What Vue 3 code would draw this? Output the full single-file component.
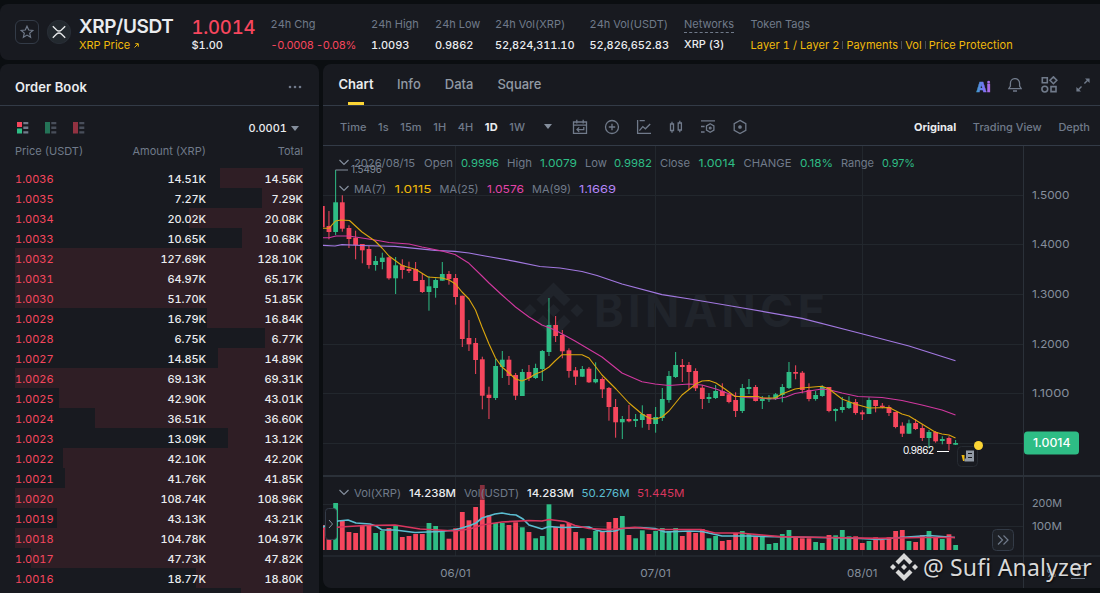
<script setup>
import { ref } from 'vue'

const stats = [
  { key: 'high', label: '24h High', value: '1.0093' },
  { key: 'low', label: '24h Low', value: '0.9862' },
  { key: 'base', label: '24h Vol(XRP)', value: '52,824,311.10' },
  { key: 'quote', label: '24h Vol(USDT)', value: '52,826,652.83' },
]

const tags = ['Layer 1 / Layer 2', 'Payments', 'Vol', 'Price Protection']

// depth is the width of the shaded bar in px
const asks = [
  { price: '1.0036', amount: '14.51K', total: '14.56K', depth: 83 },
  { price: '1.0035', amount: '7.27K', total: '7.29K', depth: 41 },
  { price: '1.0034', amount: '20.02K', total: '20.08K', depth: 114 },
  { price: '1.0033', amount: '10.65K', total: '10.68K', depth: 61 },
  { price: '1.0032', amount: '127.69K', total: '128.10K', depth: 288 },
  { price: '1.0031', amount: '64.97K', total: '65.17K', depth: 288 },
  { price: '1.0030', amount: '51.70K', total: '51.85K', depth: 288 },
  { price: '1.0029', amount: '16.79K', total: '16.84K', depth: 96 },
  { price: '1.0028', amount: '6.75K', total: '6.77K', depth: 38 },
  { price: '1.0027', amount: '14.85K', total: '14.89K', depth: 85 },
  { price: '1.0026', amount: '69.13K', total: '69.31K', depth: 288 },
  { price: '1.0025', amount: '42.90K', total: '43.01K', depth: 244 },
  { price: '1.0024', amount: '36.51K', total: '36.60K', depth: 208 },
  { price: '1.0023', amount: '13.09K', total: '13.12K', depth: 75 },
  { price: '1.0022', amount: '42.10K', total: '42.20K', depth: 240 },
  { price: '1.0021', amount: '41.76K', total: '41.85K', depth: 238 },
  { price: '1.0020', amount: '108.74K', total: '108.96K', depth: 288 },
  { price: '1.0019', amount: '43.13K', total: '43.21K', depth: 246 },
  { price: '1.0018', amount: '104.78K', total: '104.97K', depth: 288 },
  { price: '1.0017', amount: '47.73K', total: '47.82K', depth: 272 },
  { price: '1.0016', amount: '18.77K', total: '18.80K', depth: 107 },
  { price: '', amount: '', total: '', depth: 62 },
]

const tabs = ['Chart', 'Info', 'Data', 'Square']
const activeTab = ref('Chart')

const intervals = ['Time', '1s', '15m', '1H', '4H', '1D', '1W']
const activeInterval = ref('1D')

const views = ['Original', 'Trading View', 'Depth']
const activeView = ref('Original')

// high, body top, body bottom, low, volume top, rising
const series = [
  [206, 206, 227.3, 229, 525, 0],
  [211, 226, 232, 239.3, 539, 0],
  [170, 202.3, 232, 235, 503, 1],
  [195.3, 202.3, 228.7, 231.7, 521, 0],
  [225.3, 228, 239, 248, 532, 0],
  [230.7, 237.7, 245, 259.3, 533, 0],
  [244, 244, 250.3, 263.3, 526, 0],
  [246, 249, 265, 268.7, 526, 0],
  [256, 261, 265, 270.7, 533, 1],
  [252.7, 257.7, 262, 269.3, 531, 1],
  [256.7, 257.3, 278.3, 279.7, 528, 0],
  [257, 265.3, 278.3, 294, 526, 1],
  [259.3, 265.3, 270, 278.7, 537, 0],
  [261.7, 269, 271, 273, 536, 0],
  [262, 269, 281, 281, 534, 0],
  [273.3, 280, 292, 293, 534, 0],
  [276, 286.3, 292, 310.7, 523, 1],
  [278.3, 280, 288, 297.7, 526, 1],
  [262, 274, 280.7, 280.7, 531, 1],
  [271, 274, 279, 284.7, 538.7, 0],
  [274, 278, 297, 304.7, 528.3, 0],
  [295.7, 295.7, 339, 347, 512, 0],
  [320, 338, 344.3, 351, 520.3, 0],
  [338, 343, 360, 374, 507, 0],
  [356.7, 359.3, 395.7, 409.3, 485, 0],
  [386.7, 394.7, 398, 419, 515.3, 0],
  [359, 366, 398, 400, 523, 1],
  [351, 359.7, 367, 378, 523, 1],
  [356, 359.7, 376, 385, 525, 0],
  [373, 375, 395.7, 400, 522.3, 0],
  [369, 372, 396, 396, 527.3, 1],
  [365, 372, 378, 381, 532, 0],
  [363.7, 368, 378, 379, 538.3, 1],
  [350, 351, 369, 381, 536, 1],
  [298, 325, 352, 356, 504.3, 1],
  [316, 325, 336, 342, 527, 0],
  [330, 335, 351.3, 358.3, 524.3, 0],
  [348.3, 350.3, 371, 377.7, 523, 0],
  [367, 370.3, 376.7, 385, 532, 0],
  [366, 369, 376.7, 377, 538.3, 1],
  [367, 368.7, 382.3, 383, 538, 0],
  [362.3, 379, 382.3, 383.3, 531, 1],
  [377.3, 379, 389.3, 398, 531.3, 0],
  [387, 388, 407, 420.7, 522, 0],
  [399, 407, 422.3, 437.7, 518, 0],
  [416, 419, 422.3, 439, 516, 1],
  [405, 419, 421.3, 422.3, 535, 0],
  [414, 419, 421, 427, 538.3, 1],
  [405.3, 414, 420, 427.7, 530.3, 1],
  [414, 414, 424, 430, 534, 0],
  [407, 417, 424, 432.7, 531, 1],
  [388, 399, 418, 421, 528, 1],
  [371, 376, 400, 402.7, 531, 1],
  [352, 365, 377, 378, 528, 1],
  [359, 365, 367, 382, 536, 0],
  [362, 365, 372, 390, 531, 0],
  [368.3, 371, 388.3, 391, 533, 0],
  [385, 387.7, 399, 409, 529, 0],
  [393, 397, 399, 403, 538.3, 1],
  [385, 391, 398, 399, 536, 1],
  [383.3, 391, 396, 396, 541, 0],
  [393, 394.3, 402, 403.3, 540, 0],
  [392.3, 400, 411, 417, 533, 0],
  [384, 388, 411, 413, 531, 1],
  [379, 387, 389, 394, 534, 1],
  [385, 387, 401, 401.5, 536, 0],
  [396, 399, 401, 409, 536.3, 1],
  [395, 398, 399.5, 402, 544, 1],
  [393, 394.3, 399, 400, 543, 1],
  [384, 387, 395, 402.3, 534, 1],
  [362, 372, 388, 389, 530, 1],
  [365.3, 372, 373.7, 379.3, 536.3, 0],
  [371, 372.7, 390, 393.3, 538.3, 0],
  [383.3, 390, 399, 401.3, 538.3, 0],
  [391, 395, 399, 400.7, 542, 1],
  [385.3, 387, 396, 396.7, 543, 1],
  [387, 387, 411, 412.3, 535, 0],
  [408.3, 409, 411, 421.3, 535.3, 1],
  [397, 407, 410, 412.7, 530, 1],
  [396.3, 402, 408, 409, 536.3, 1],
  [399, 402, 413, 414.7, 536.3, 0],
  [410.3, 412.3, 414.3, 420, 543, 0],
  [397.3, 400, 414, 414, 541, 1],
  [400, 400, 406, 412.3, 537.3, 0],
  [403, 405.7, 407, 408.3, 540, 0],
  [405.3, 407, 413, 416, 537.3, 0],
  [412, 412, 427, 428.3, 531, 0],
  [422.3, 425.7, 433.7, 437, 530, 0],
  [419.7, 423.3, 433.7, 434, 541, 1],
  [419, 423, 429, 430, 542, 0],
  [424.3, 428, 438, 441, 535, 0],
  [430, 432, 438, 448, 531, 1],
  [431, 432, 441.3, 442.7, 537.3, 0],
  [436.3, 439, 441, 444.3, 539, 1],
  [436.3, 438, 444, 450.3, 534.3, 0],
  [440, 443, 444.7, 445, 545, 1],
]

const candles = series.map(([high, top, bottom, low, volume, up], i) => ({
  x: 322.3 + i * 6.6667,
  high,
  top,
  bottom,
  low,
  volume,
  color: up ? '#2ebd85' : '#f6465d',
}))

const ma7 =
  '323,228.3 328.8,228.3 335.5,221 341,220 349.5,220.5 362,232 375,241 382,248 389,256 402,265.5 416,269.5 428,277 442,278 449,280 455.5,284 462,292 469,299 475.5,310 482,327 489,344 495.5,358 502,367 509,373 515.5,379 522,381 529,378 535.5,374 542,371.5 549,367 555,361 562,354.7 582,354.7 589,358 602,375 616,389 629,403 642,414 650,418.5 656,419 662,417 669,411 682,395 696,384 702,381 709,380.5 716,383 725,389 735,396.5 758,396.5 762,398 775,398 782,394 795,389 802,388 822,386.3 829,389 842,399 855,404 869,408 889,407.5 902,414 909,416 922,424 935,432 942,434 949,435 955.5,438'
const ma25 =
  '323,237.7 329,237.7 336,236 349,236 362,238 375,240 389,242.5 409,244 422,247 442,251 455,254.5 469,263.3 482,276 489,283 502,295 515.5,307 529,317 542,325 555,330 575,341 602,357 622,373 642,381.7 655,384 669,385.5 689,384 702,385 716,389 735,396 745,397.5 758,398 775,399 786,397 795,393.5 809,391 822,389 829,389.7 842,393 858,396.5 882,397.5 902,400.5 922,405 942,410 955.5,415'
const ma99 =
  '323,245.3 335,246 342,244.7 362,245.5 395,246.3 415,248.3 435,250.3 455,251.3 469,253 485,256 515,261.3 540,266.5 560,268 582,271.5 597,275.5 622,284 662,294.7 690,299 740,307.5 802,318.3 855,332 909,346 955.5,360.7'
const volFast =
  '323,527 338,521 348,520 356,523 370,524 376,526 382,530 395,530 415,532.5 440,531.5 455,530 470,525.5 476,523 482,518 495,514 502,513 510,514.5 516,515 523,519 529,525 542,529 549,526.5 562,527.5 589,527 596,530 602,531.5 615,531 622,528.5 640,527.5 655,528.5 665,532 689,531 702,531.5 722,536 749,536 790,537 850,538 880,539.5 900,537.5 929,535.5 942,536.5 955,537.5'
const volSlow =
  '323,529 340,527 365,525.5 395,525 420,529 455,531 470,529 482,525 502,522 529,520.5 542,521 549,519.5 565,521.5 575,525.5 589,528.5 609,529.5 635,527.3 655,529.5 680,529.5 701,529.5 715,533 740,533 762,535 780,536.7 830,537.5 880,538.3 920,537.5 955,537.5'

const priceTicks = [
  { y: 195.3, label: '1.5000' },
  { y: 244.9, label: '1.4000' },
  { y: 294.5, label: '1.3000' },
  { y: 344.1, label: '1.2000' },
  { y: 393.7, label: '1.1000' },
  { y: 443.3, label: '' },
]
const volumeTicks = [
  { y: 504, label: '200M' },
  { y: 526.5, label: '100M' },
]
const months = [
  { x: 455.5, label: '06/01' },
  { x: 655.5, label: '07/01' },
  { x: 862.3, label: '08/01' },
]

const legend = [
  // date and prices
  { x: 354, y: 167, w: 61, text: '2026/08/15', tone: 'muted' },
  { x: 424, y: 167, w: 29, text: 'Open', tone: 'muted' },
  { x: 461, y: 167, w: 38, text: '0.9996', tone: 'up' },
  { x: 507, y: 167, w: 25, text: 'High', tone: 'muted' },
  { x: 540, y: 167, w: 37, text: '1.0079', tone: 'up' },
  { x: 585, y: 167, w: 22, text: 'Low', tone: 'muted' },
  { x: 614, y: 167, w: 38, text: '0.9982', tone: 'up' },
  { x: 660, y: 167, w: 30, text: 'Close', tone: 'muted' },
  { x: 698.5, y: 167, w: 37, text: '1.0014', tone: 'up' },
  { x: 743.5, y: 167, w: 48, text: 'CHANGE', tone: 'muted' },
  { x: 800, y: 167, w: 33, text: '0.18%', tone: 'up' },
  { x: 841, y: 167, w: 33, text: 'Range', tone: 'muted' },
  { x: 882, y: 167, w: 33, text: '0.97%', tone: 'up' },
  // moving averages
  { x: 354, y: 193, w: 32, text: 'MA(7)', tone: 'muted' },
  { x: 394.5, y: 193, w: 37, text: '1.0115', tone: 'gold' },
  { x: 439.5, y: 193, w: 39, text: 'MA(25)', tone: 'muted' },
  { x: 487, y: 193, w: 37, text: '1.0576', tone: 'pink' },
  { x: 532, y: 193, w: 39, text: 'MA(99)', tone: 'muted' },
  { x: 579, y: 193, w: 37, text: '1.1669', tone: 'violet' },
  // volume
  { x: 354, y: 497, w: 47, text: 'Vol(XRP)', tone: 'muted' },
  { x: 409, y: 497, w: 47, text: '14.238M', tone: 'strong' },
  { x: 464, y: 497, w: 55, text: 'Vol(USDT)', tone: 'muted' },
  { x: 527, y: 497, w: 47, text: '14.283M', tone: 'strong' },
  { x: 581.5, y: 497, w: 48, text: '50.276M', tone: 'cyan' },
  { x: 637, y: 497, w: 47.5, text: '51.445M', tone: 'red' },
]
</script>

<template>
  <div class="app">
    <header class="ticker">
      <button type="button" class="favorite" aria-label="Add to favorites">
        <svg width="14" height="14" viewBox="0 0 14 14">
          <path d="M7 1.2 8.7 5l4.1.4-3.1 2.7.9 4.1L7 10.1l-3.6 2.1.9-4.1L1.2 5.4 5.3 5Z" fill="none" stroke="#707a8a" stroke-width="1.2" />
        </svg>
      </button>
      <svg class="coin" width="24" height="24" viewBox="0 0 24 24">
        <circle cx="12" cy="12" r="11.7" fill="#23292f" stroke="#2f363f" stroke-width=".6" />
        <path d="M5.8 6.3 9.6 10q2.4 2.1 4.8 0l3.8-3.7M5.8 17.7 9.6 14q2.4-2.1 4.8 0l3.8 3.7" fill="none" stroke="#e6e8ea" stroke-width="1.4" />
      </svg>
      <div class="pair">
        <h1>XRP/USDT</h1>
        <a class="price-link">
          XRP Price
          <svg width="5" height="5" viewBox="0 0 5 5"><path d="M.5 4.5 4 1M1.3.7h3v3" fill="none" stroke="#f0b90b" /></svg>
        </a>
      </div>
      <div class="last">
        <strong>1.0014</strong>
        <span>$1.00</span>
      </div>
      <div class="stat change">
        <span class="label">24h Chg</span>
        <span class="value">-0.0008 -0.08%</span>
      </div>
      <div v-for="stat in stats" :key="stat.key" class="stat" :class="stat.key">
        <span class="label">{{ stat.label }}</span>
        <span class="value">{{ stat.value }}</span>
      </div>
      <div class="stat networks">
        <span class="label">Networks</span>
        <span class="value">XRP (3)</span>
      </div>
      <div class="stat tags">
        <span class="label">Token Tags</span>
        <span class="tag-list"><a v-for="tag in tags" :key="tag">{{ tag }}</a></span>
      </div>
    </header>

    <main class="panels">
      <section class="order-book">
        <div class="panel-head">
          <h2>Order Book</h2>
          <svg width="14" height="4" viewBox="0 0 14 4" fill="#707a8a"><circle cx="2" cy="2" r="1.3" /><circle cx="7" cy="2" r="1.3" /><circle cx="12" cy="2" r="1.3" /></svg>
        </div>
        <div class="book-tools">
          <svg width="12" height="12" viewBox="0 0 12 12">
            <path d="M0 0h5v5H0z" fill="#f6465d" /><path d="M0 6.5h5v5H0z" fill="#2ebd85" />
            <path d="M6.3 0h5v2.3h-5zM6.3 4.6h5v2.3h-5zM6.3 9.2h5v2.3h-5z" fill="#707a8a" />
          </svg>
          <svg class="dim" width="12" height="12" viewBox="0 0 12 12">
            <path d="M0 0h5v11.5H0z" fill="#2ebd85" />
            <path d="M6.3 0h5v2.3h-5zM6.3 4.6h5v2.3h-5zM6.3 9.2h5v2.3h-5z" fill="#707a8a" />
          </svg>
          <svg class="dim" width="12" height="12" viewBox="0 0 12 12">
            <path d="M0 0h5v11.5H0z" fill="#f6465d" />
            <path d="M6.3 0h5v2.3h-5zM6.3 4.6h5v2.3h-5zM6.3 9.2h5v2.3h-5z" fill="#707a8a" />
          </svg>
          <span class="tick-size">0.0001</span>
          <span class="caret"></span>
        </div>
        <div class="book-row book-labels">
          <span>Price (USDT)</span>
          <span>Amount (XRP)</span>
          <span>Total</span>
        </div>
        <div class="asks">
          <div v-for="ask in asks" :key="ask.price" class="book-row ask">
            <div class="depth" :style="{ width: ask.depth + 'px' }"></div>
            <span class="ask-price">{{ ask.price }}</span>
            <span>{{ ask.amount }}</span>
            <span>{{ ask.total }}</span>
          </div>
        </div>
      </section>

      <section class="chart-panel">
        <nav class="tabs">
          <button
            v-for="tab in tabs"
            :key="tab"
            type="button"
            :class="{ 'is-active': tab === activeTab }"
            @click="activeTab = tab"
          >
            {{ tab }}
          </button>
          <div class="tab-icons">
            <span class="ai">Ai</span>
            <svg width="14" height="14" viewBox="0 0 14 14" fill="none" stroke="#707a8a" stroke-width="1.3">
              <path d="M.8 10.6h12.4L11.6 8V5.2a4.6 4.6 0 0 0-9.2 0V8ZM5 13h4" />
            </svg>
            <svg width="17" height="17" viewBox="0 0 17 17" fill="none" stroke="#707a8a" stroke-width="1.6">
              <path d="M1.3 1.8h5v5h-5zM12.4.9l3.4 3.4-3.4 3.4L9 4.3ZM10 10.6h5v5h-5z" /><circle cx="3.8" cy="13.1" r="2.9" />
            </svg>
            <svg width="14" height="14" viewBox="0 0 14 14">
              <path d="m1.8 12.2 3.7-3.7m2.9-2.9 3.8-3.8" fill="none" stroke="#707a8a" stroke-width="1.4" />
              <path d="M9 .4h4.6V5zM.4 9v4.6H5z" fill="#707a8a" />
            </svg>
          </div>
        </nav>

        <div class="toolbar">
          <button
            v-for="interval in intervals"
            :key="interval"
            type="button"
            class="interval"
            :class="{ 'is-active': interval === activeInterval }"
            @click="activeInterval = interval"
          >
            {{ interval }}
          </button>
          <span class="caret"></span>
          <div class="tools">
            <svg viewBox="0 0 16 16"><path d="M1.5 3h13v11.3h-13zM1.5 6.2h13M4.8.8v3.6M11.2.8v3.6M11.8 8v2.6H5M7.2 8.4 5 10.6l2.2 2.2" /></svg>
            <svg viewBox="0 0 16 16"><circle cx="8" cy="8" r="6.5" /><path d="M8 4.8v6.4M4.8 8h6.4" /></svg>
            <svg viewBox="0 0 16 16"><path d="M1.6 1v13.4H15M3.6 1.7h5.2M3.4 11.6 6.8 7.6l2.6 2.2L14.2 5" /></svg>
            <svg viewBox="0 0 16 16"><path d="M2.5 5h3v6.5h-3zM4 2.8V5M4 11.5v2.2M10.2 4h3.2v7h-3.2zM11.8 1.8V4M11.8 11v2.2" /></svg>
            <svg viewBox="0 0 16 16"><path d="M1 1.8h14M1 7.5h3.6M1 13h3.6M10.2 4.8l3.7 2.1v4.2l-3.7 2.1-3.7-2.1V6.9Z" /><circle cx="10.2" cy="9" r=".9" /></svg>
            <svg viewBox="0 0 16 16"><path d="m8 1.4 5.8 3.3v6.6L8 14.6l-5.8-3.3V4.7Z" /><circle cx="8" cy="8" r="1.2" fill="#707a8a" /></svg>
          </div>
          <div class="views">
            <button
              v-for="view in views"
              :key="view"
              type="button"
              :class="{ 'is-active': view === activeView }"
              @click="activeView = view"
            >
              {{ view }}
            </button>
          </div>
        </div>

        <svg class="chart" width="777" height="442" viewBox="323 146 777 442">
          <!-- grid -->
          <g stroke="#22272d">
            <path v-for="tick in [...priceTicks, ...volumeTicks]" :key="tick.y" :d="`M323 ${Math.floor(tick.y) + 0.5}H1023`" />
            <path v-for="month in months" :key="month.x" :d="`M${Math.floor(month.x) + 0.5} 146V556`" />
          </g>

          <!-- watermark -->
          <g fill="#20242b">
            <g transform="translate(553.5 310.5)">
              <path d="m0-28 17 17-6.5 6.5L0-15l-10.5 10.5L-17-11ZM0 28 17 11l-6.5-6.5L0 15-10.5 4.5-17 11ZM0-6.5 6.5 0 0 6.5-6.5 0ZM-23.5-6.5-17 0l-6.5 6.5L-30 0ZM23.5-6.5 30 0l-6.5 6.5L17 0Z" />
            </g>
            <text x="594" y="327" font-size="45" font-weight="700" textLength="231">BINANCE</text>
          </g>

          <path d="M323 476H1100" stroke="#2b3139" stroke-width="2" />
          <path d="M323 556H1100M1023.5 146V588" stroke="#2b3139" />

          <g>
            <template v-for="candle in candles" :key="candle.x">
              <path :d="`M${candle.x} ${candle.high}V${candle.low}`" :stroke="candle.color" />
              <rect :x="candle.x - 2.4" :y="candle.top" width="4.8" :height="candle.bottom - candle.top" :fill="candle.color" />
              <rect :x="candle.x - 2.4" :y="candle.volume" width="4.8" :height="550 - candle.volume" :fill="candle.color" />
            </template>
          </g>
          <!-- the tallest bar fades behind the volume legend -->
          <rect x="479" y="484" width="7" height="16" fill="#181a20" opacity="0.5" />

          <g fill="none" stroke-linejoin="round">
            <polyline :points="ma99" stroke="#a278e0" stroke-width="1.2" />
            <polyline :points="ma25" stroke="#d1389f" stroke-width="1.1" />
            <polyline :points="ma7" stroke="#dba60e" stroke-width="1.1" />
            <polyline :points="volFast" stroke="#5bbdd0" stroke-width="1.7" />
            <polyline :points="volSlow" stroke="#d9365e" stroke-width="1.7" />
          </g>

          <!-- high and low marks -->
          <path d="M335.5 170H348" stroke="#848e9c" />
          <text x="351" y="173" font-size="10" fill="#848e9c" textLength="31">1.5496</text>
          <path d="M937 451.5H949" stroke="#fff" />
          <text x="903" y="454.3" font-size="10" fill="#fff" textLength="31">0.9862</text>

          <!-- legend -->
          <g fill="none" stroke="#848e9c" stroke-width="1.2">
            <path d="m339.5 160 4.5 4.5 4.5-4.5M339.5 186l4.5 4.5 4.5-4.5M339.5 490l4.5 4.5 4.5-4.5" />
          </g>
          <text
            v-for="item in legend"
            :key="`${item.x}-${item.y}`"
            :x="item.x"
            :y="item.y"
            :textLength="item.w"
            :class="item.tone"
            lengthAdjust="spacingAndGlyphs"
            font-size="11"
          >{{ item.text }}</text>

          <!-- axes -->
          <g class="axis">
            <text v-for="tick in priceTicks" :key="tick.y" x="1032" :y="tick.y + 3.4" textLength="37.5" lengthAdjust="spacingAndGlyphs">{{ tick.label }}</text>
            <text v-for="tick in volumeTicks" :key="tick.y" x="1032" :y="tick.y + 3.2" textLength="30" lengthAdjust="spacingAndGlyphs">{{ tick.label }}</text>
            <text v-for="month in months" :key="month.x" :x="month.x" y="577" text-anchor="middle" textLength="30.5" lengthAdjust="spacingAndGlyphs">{{ month.label }}</text>
            <text x="1046" y="577">%</text>
          </g>
          <path d="M1071 565.5H1085M1071 578.5H1085M1078 567V575" stroke="#707a8a" />
          <rect x="1024" y="431.500" width="55" height="23" rx="3.5" fill="#2ebd85" />
          <text x="1033" y="447" font-size="11.5" font-weight="500" fill="#fff" textLength="37.5" lengthAdjust="spacingAndGlyphs">1.0014</text>

          <!-- news marker -->
          <rect x="957.5" y="446.5" width="20" height="20" rx="4" fill="#181a20" stroke="#262b32" />
          <path d="M961.5 455h3v6h-1.5z" fill="#f0b90b" />
          <path d="M966 450.5h8v11h-9.5v-3h1.5z" fill="#929aa5" />
          <path d="M968 453.5h4M968 457.5h4" stroke="#181a20" />
          <circle cx="978.5" cy="445.5" r="4.5" fill="#fcd535" />

          <!-- scroll buttons -->
          <rect x="325.5" y="508.5" width="11" height="31" rx="3" fill="#181a20" stroke="#333b47" />
          <path d="m329 520 3.5 4-3.5 4" fill="none" stroke="#848e9c" />
          <rect x="992.5" y="529.5" width="21" height="21" rx="4" fill="#1e2127" stroke="#333b47" />
          <path d="m998 535.5 4.5 4.5-4.5 4.5M1003.5 535.5l4.5 4.5-4.5 4.5" fill="none" stroke="#707a8a" stroke-width="1.2" />
        </svg>
      </section>
    </main>

    <div class="signature">
      <svg width="28" height="28" viewBox="-14 -14 28 28" fill="#d9d9d9">
        <path d="m0-14 8.5 8.5-3 3L0-8l-5.5 5.5-3-3ZM0 14l8.500-8.500-3-3L0 8l-5.500-5.500-3 3ZM0-3 3 0 0 3-3 0ZM-11-3-8 0l-3 3-3-3ZM11-3l3 3-3 3-3-3Z" />
      </svg>
      <span>@ Sufi Analyzer</span>
    </div>
  </div>
</template>

<style>
body {
  background: #0b0e11;
  overflow: hidden;
}
</style>

<style scoped>
.app {
  position: relative;
  box-sizing: border-box;
  width: 1100px;
  height: 593px;
  padding-top: 4px;
  overflow: hidden;
  color: #eaecef;
  font-family: Inter, sans-serif;
  font-size: 12px;
  background: #0b0e11;
}

svg {
  display: block;
  flex: none;
}

button {
  padding: 0;
  border: 0;
  color: inherit;
  font: inherit;
  letter-spacing: inherit;
  white-space: nowrap;
  background: none;
  cursor: pointer;
}

.ticker {
  display: flex;
  box-sizing: border-box;
  height: 56px;
  padding: 0 15px;
  border-radius: 8px 0 0 8px;
  background: #181a20;
  font-variant-numeric: tabular-nums;
}

.favorite {
  display: grid;
  box-sizing: border-box;
  width: 24px;
  height: 24px;
  margin-top: 16px;
  place-items: center;
  border: 1px solid #333b47;
  border-radius: 6px;
}

.coin {
  margin: 16px 8px 0;
}

.pair {
  width: 112.5px;
}

h1 {
  margin: 12px 0 0;
  font-size: 19px;
  font-weight: 600;
  line-height: 22px;
  letter-spacing: -0.4px;
}

.price-link {
  display: flex;
  gap: 4px;
  align-items: center;
  color: #f0b90b;
  font-size: 11px;
  line-height: 15px;
}

.last {
  display: flex;
  flex-direction: column;
  width: 79px;
}

.last strong {
  margin-top: 12px;
  color: #f6465d;
  font-size: 18.5px;
  font-weight: 500;
  line-height: 22px;
  letter-spacing: -0.2px;
}

.last span {
  font-size: 11px;
  font-weight: 500;
  line-height: 15px;
}

.stat {
  display: flex;
  flex: none;
  flex-direction: column;
  font-size: 11px;
  line-height: 14px;
  white-space: nowrap;
}

.label {
  margin-top: 13px;
  color: #707a8a;
}

.value {
  margin-top: 7px;
  font-weight: 550;
  letter-spacing: -0.05px;
}

.change {
  width: 100.5px;
}

.change .value {
  color: #f6465d;
  font-weight: 400;
  letter-spacing: -0.4px;
}

.high {
  width: 64px;
}

.low {
  width: 60px;
}

.base {
  width: 94.5px;
}

.quote {
  width: 94.5px;
}

.networks {
  width: 66.5px;
  align-items: flex-start;
}

.networks .label {
  padding-bottom: 1px;
  border-bottom: 1px dashed #707a8a;
}

.networks .value {
  margin-top: 4px;
}

.tag-list {
  display: flex;
  margin-top: 7px;
  color: #f0b90b;
  letter-spacing: 0.08px;
}

.tag-list a + a::before {
  display: inline-block;
  width: 1px;
  height: 8px;
  margin: 0 3px;
  background: #474d57;
  content: '';
}

.panels {
  display: flex;
  gap: 4px;
  margin-top: 4px;
}

.order-book {
  display: flex;
  flex-direction: column;
  width: 319px;
  height: 540px;
  border-radius: 8px 8px 0 0;
  background: #181a20;
  overflow: hidden;
}

.panel-head {
  display: flex;
  box-sizing: border-box;
  height: 42px;
  flex: none;
  padding: 4px 17px 0 15px;
  align-items: center;
  justify-content: space-between;
  border-bottom: 1px solid #333b47;
}

h2 {
  margin: 0;
  font-size: 13px;
  font-weight: 600;
  letter-spacing: 0.1px;
}

.book-tools {
  display: flex;
  gap: 16px;
  height: 44px;
  flex: none;
  padding: 0 20px 0 17px;
  align-items: center;
}

.dim {
  opacity: 0.55;
}

.tick-size {
  margin-left: auto;
  margin-right: -12px;
  font-size: 11px;
  font-weight: 500;
  font-variant-numeric: tabular-nums;
}

.caret {
  width: 0;
  height: 0;
  border: 4px solid transparent;
  border-top: 5px solid #848e9c;
  border-bottom: 0;
}

.book-row {
  display: grid;
  grid-template-columns: 95px 96px 97px;
  height: 20px;
  margin: 0 16px 0 15px;
  align-items: center;
  font-size: 11px;
  font-weight: 550;
  font-variant-numeric: tabular-nums;
  letter-spacing: -0.1px;
}

.book-row span:not(:first-of-type) {
  text-align: right;
}

.book-labels {
  height: 14px;
  flex: none;
  margin-top: -6px;
  margin-bottom: 10px;
  color: #707a8a;
  font-weight: 400;
  letter-spacing: 0;
}

.ask {
  position: relative;
  isolation: isolate;
  padding-top: 2px;
  box-sizing: border-box;
}

.depth {
  position: absolute;
  z-index: -1;
  top: 0;
  right: 0;
  height: 20px;
  background: #2f1e25;
}

.ask-price {
  color: #f6465d;
  font-weight: 400;
  letter-spacing: 0;
}

.chart-panel {
  width: 777px;
  height: 524px;
  border-radius: 8px 0 0 8px;
  background: #181a20;
  overflow: hidden;
}

.tabs {
  display: flex;
  gap: 24px;
  box-sizing: border-box;
  height: 42px;
  padding: 0 10px 0 16px;
  border-bottom: 1px solid #333b47;
  color: #929aa5;
  font-size: 13px;
}

.tabs button {
  display: flex;
  flex-direction: column;
  align-items: center;
  padding-top: 12px;
  font-weight: 500;
  line-height: 16px;
}

.tabs .is-active {
  width: 34px;
  color: #eaecef;
  font-weight: 600;
}

.tabs .is-active::after {
  width: 16px;
  height: 3px;
  margin-top: auto;
  background: #fcd535;
  content: '';
}

.tab-icons {
  display: flex;
  margin-left: auto;
  align-items: center;
}

.tab-icons svg:nth-of-type(1) {
  margin: 0 18.5px 0 17.5px;
}

.tab-icons svg:nth-of-type(3) {
  margin-left: 18.5px;
}

.ai {
  color: transparent;
  font-size: 13px;
  font-weight: 900;
  line-height: 16px;
  padding-top: 5px;
  -webkit-text-stroke: 0.4px transparent;
  background: linear-gradient(90deg, #3aa0c8, #7774f5 50%, #c169e0);
  background-clip: text;
}

.toolbar {
  display: flex;
  box-sizing: border-box;
  height: 40px;
  padding: 2px 10px 0 17px;
  align-items: center;
  border-bottom: 1px solid #333b47;
  color: #707a8a;
  font-size: 11px;
  font-weight: 500;
}

.interval {
  margin-right: 11.5px;
  letter-spacing: 0.1px;
}

.toolbar .is-active {
  color: #eaecef;
  font-weight: 700;
}

.toolbar > .caret {
  margin: 0 20px 0 auto;
}

.tools {
  display: flex;
  gap: 16px;
}

.tools svg {
  width: 16px;
  height: 16px;
  fill: none;
  stroke: #707a8a;
  stroke-width: 1.3;
}

.views {
  display: flex;
  width: 176px;
  margin-left: 166px;
  justify-content: space-between;
}

.chart text {
  font-family: Inter, sans-serif;
}

.axis {
  fill: #848e9c;
  font-size: 11px;
}

.muted {
  fill: #707a8a;
}

.strong {
  fill: #eaecef;
  font-weight: 500;
}

.up {
  fill: #2ebd85;
}

.gold {
  fill: #f0b90b;
}

.pink {
  fill: #e344a8;
}

.violet {
  fill: #b385f8;
}

.cyan {
  fill: #5bbdd0;
}

.red {
  fill: #d9365e;
}

.signature {
  position: absolute;
  right: 8px;
  bottom: 11px;
  display: flex;
  gap: 5px;
  align-items: center;
  color: #d9d9d9;
  font-family: 'Noto Sans', sans-serif;
  font-size: 23px;
  line-height: 30px;
  letter-spacing: 0.2px;
  white-space: nowrap;
  text-shadow: 1px 1px 2px rgba(0, 0, 0, 0.7);
}
</style>
